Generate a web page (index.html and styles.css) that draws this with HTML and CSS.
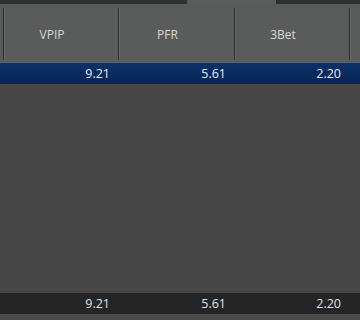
FILE: index.html
```html
<!DOCTYPE html>
<html lang="en">
  <head>
    <meta charset="UTF-8" />
    <meta name="viewport" content="width=device-width, initial-scale=1.0" />
    <title>Stats</title>
    <link rel="stylesheet" href="styles.css">
  </head>
  <body>
    <div class="top-strip">
      <div class="strip-dark"></div>
      <div class="strip-tab"></div>
      <div class="strip-dark"></div>
    </div>

    <div class="grid header">
      <div class="cell edge"></div>
      <div class="cell head">VPIP</div>
      <div class="cell head">PFR</div>
      <div class="cell head">3Bet</div>
      <div class="cell head tail"></div>
    </div>

    <div class="grid row selected">
      <div class="cell"></div>
      <div class="cell num">9.21</div>
      <div class="cell num">5.61</div>
      <div class="cell num">2.20</div>
      <div class="cell"></div>
    </div>

    <div class="empty"></div>

    <div class="grid row totals">
      <div class="cell"></div>
      <div class="cell num">9.21</div>
      <div class="cell num">5.61</div>
      <div class="cell num">2.20</div>
      <div class="cell"></div>
    </div>

    <div class="bottom"></div>
  </body>
</html>
```

FILE: styles.css
```css
body {
  margin: 0;
  width: 360px;
  height: 320px;
  overflow: hidden;
  background: #474747;
  font-family: "Open Sans", "Noto Sans", sans-serif;
  display: flex;
  flex-direction: column;
}

.top-strip {
  display: flex;
  height: 4px;
}

.strip-dark {
  background: #2e3131;
  flex: 1;
}

.strip-dark:first-child {
  flex: 0 0 187px;
}

.strip-tab {
  flex: 0 0 89px;
  background: #5b5d5d;
}

.grid {
  display: grid;
  grid-template-columns: 3px 115px 116px 115px 11px;
}

.header {
  height: 58px;
  background: #5a5c5c;
  border-bottom: 1px solid #646666;
}

.head {
  display: flex;
  align-items: center;
  justify-content: center;
  padding-right: 18px;
  margin: 4px 0 2px;
  border-left: 1px solid #2f3131;
  box-shadow: inset 1px 0 0 #686a6a;
  color: #d6d8d8;
  font-size: 12px;
}

.head.tail {
  padding: 0;
}

.row {
  height: 21px;
  line-height: 21px;
  color: #e8ecf2;
  font-size: 12.5px;
}

.num {
  text-align: right;
  padding-right: 8px;
}

.selected {
  background: linear-gradient(#0d3168, #0a2a5e 50%, #082556);
}

.empty {
  height: 209px;
  background: #474747;
}

.totals {
  background: #242526;
  color: #e2e2e2;
}

.bottom {
  flex: 1;
  background: #4a4a4a;
}
```
